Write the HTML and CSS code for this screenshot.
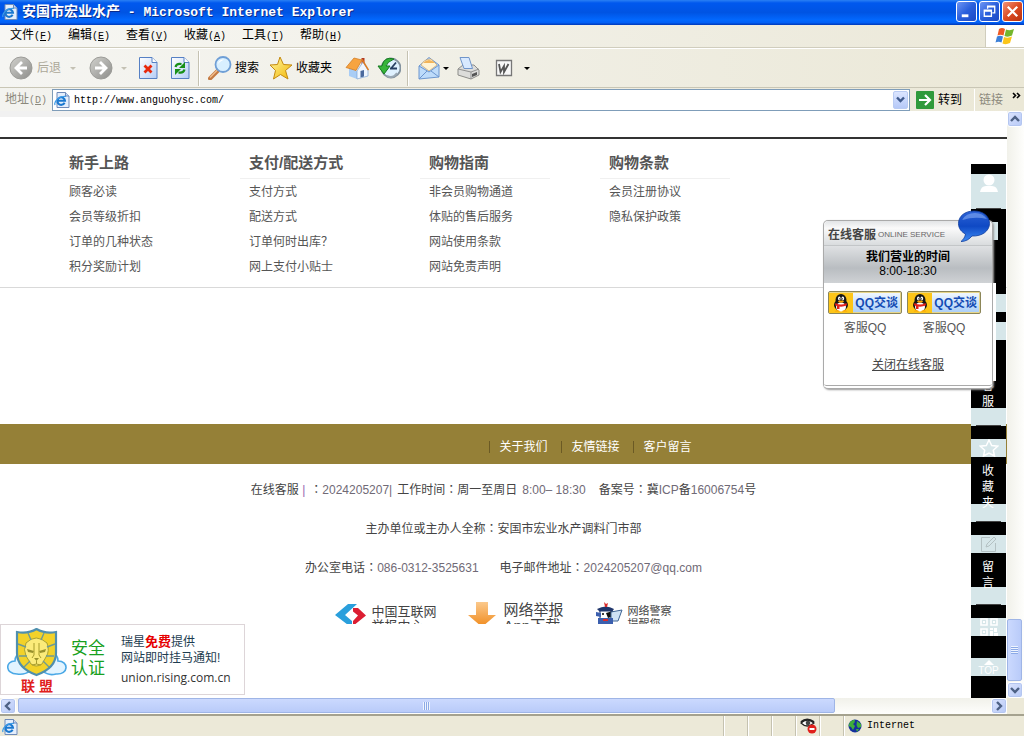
FILE: index.html
```html
<!DOCTYPE html>
<html lang="zh-CN">
<head>
<meta charset="utf-8">
<title>安国市宏业水产 - Microsoft Internet Explorer</title>
<link rel="stylesheet" href="styles.css">
</head>
<body>
<svg width="0" height="0" class="defs" aria-hidden="true">
  <defs>
    <linearGradient id="gGrey" x1="0" y1="0" x2="1" y2="1"><stop offset="0" stop-color="#d2d2ce"/><stop offset="1" stop-color="#8d8d8a"/></linearGradient>
    <linearGradient id="gPage" x1="0" y1="0" x2="1" y2="1"><stop offset="0" stop-color="#fff"/><stop offset="1" stop-color="#b5cdf6"/></linearGradient>
    <linearGradient id="gBubble" x1="0" y1="0" x2="0" y2="1"><stop offset="0" stop-color="#2c62d6"/><stop offset=".5" stop-color="#0f49c4"/><stop offset="1" stop-color="#3d8cf5"/></linearGradient>
    <linearGradient id="gStar" x1="0" y1="0" x2="1" y2="1"><stop offset="0" stop-color="#fff6a0"/><stop offset="1" stop-color="#f2b705"/></linearGradient>
    <linearGradient id="gDown" x1="0" y1="0" x2="0" y2="1"><stop offset="0" stop-color="#fbc98c"/><stop offset="1" stop-color="#f08a1c"/></linearGradient>
    <symbol id="ie" viewBox="0 0 16 16">
      <path d="M3 .5h8.500L15 4v11.500H3z" fill="#e4eefc" stroke="#6f8ab8"/>
      <path d="M11.500.5V4H15" fill="#c5d8f5" stroke="#6f8ab8"/>
      <path d="M10.600 10.800A3.800 3.800 0 1 1 11 8.700H4" fill="none" stroke="#1a78cf" stroke-width="2"/>
      <path d="M1 13C-.5 9 6 3.500 12 4.500" fill="none" stroke="#3c9be8" stroke-width="1.200"/>
    </symbol>
    <symbol id="penguin" viewBox="0 0 20 20">
      <ellipse cx="10" cy="12" rx="7" ry="6" fill="#151515"/>
      <ellipse cx="10" cy="7" rx="5.500" ry="6" fill="#151515"/>
      <ellipse cx="10" cy="14" rx="5" ry="4.500" fill="#fff"/>
      <ellipse cx="8.300" cy="5.500" rx="1.300" ry="1.900" fill="#fff"/><ellipse cx="11.800" cy="5.500" rx="1.300" ry="1.900" fill="#fff"/>
      <circle cx="8.700" cy="5.800" r=".6"/><circle cx="11.400" cy="5.800" r=".6"/>
      <ellipse cx="10" cy="8.600" rx="3" ry="1.100" fill="#f9a300"/>
      <path d="M4.500 10q5.500 3 11 0l.5 2.300q-6 2.700-12 0z" fill="#e3201b"/><path d="M6 12.500h2.500V16H6z" fill="#e3201b"/>
      <path d="M3.500 18.500q3-3 6 0zM10.500 18.500q3-3 6 0z" fill="#f9a300"/>
    </symbol>
  </defs>
</svg>

<header class="titlebar">
  <svg class="i16"><use href="#ie"/></svg>
  <h1 class="title">安国市宏业水产<span class="title-latin"> - Microsoft Internet Explorer</span></h1>
  <div class="winbtns">
    <button class="winbtn" aria-label="最小化"><svg viewBox="0 0 20 20"><path d="M5 13h7v3H5z" fill="#fff"/></svg></button>
    <button class="winbtn" aria-label="还原"><svg viewBox="0 0 20 20"><path d="M8 7V4.500h7.500v7H13M4.500 8.500h7.500v6.500H4.500zM4.500 9.500H12M8 5h7" fill="none" stroke="#fff" stroke-width="1.400"/></svg></button>
    <button class="winbtn close" aria-label="关闭"><svg viewBox="0 0 20 20"><path d="M5 5l10 10M15 5L5 15" stroke="#fff" stroke-width="2.400"/></svg></button>
  </div>
</header>

<nav class="menubar">
  <div class="menus">
    <button class="menu">文件<span class="key">(<u>F</u>)</span></button>
    <button class="menu">编辑<span class="key">(<u>E</u>)</span></button>
    <button class="menu">查看<span class="key">(<u>V</u>)</span></button>
    <button class="menu">收藏<span class="key">(<u>A</u>)</span></button>
    <button class="menu">工具<span class="key">(<u>T</u>)</span></button>
    <button class="menu">帮助<span class="key">(<u>H</u>)</span></button>
  </div>
  <div class="flag">
    <svg width="20" height="18" viewBox="0 0 20 18"><path d="M4 2q3-2 6 0L8.500 8.500q-3-1.500-6 0z" fill="#ee5a24"/><path d="M11 2.500q4 1.500 8-.5L17 8.500q-4 2-7.500.5z" fill="#74b62c"/><path d="M2 9.500q3-1.500 6 0L6.500 15.500q-3-1.500-6 0z" fill="#3c80d8"/><path d="M9 10q4 1.500 8-.5L15 16q-4 2-7.500.5z" fill="#fbc51a"/></svg>
  </div>
</nav>

<div class="toolbar">
  <button class="tool dim back"><svg class="i24" viewBox="0 0 24 24"><circle cx="12" cy="12" r="11" fill="url(#gGrey)" stroke="#9c9c98"/><path d="M13 6l-6 6 6 6M7.500 12H18" fill="none" stroke="#fff" stroke-width="2.800"/></svg><span>后退</span></button>
  <i class="drop dim g9"></i>
  <button class="tool g13" aria-label="前进"><svg class="i24" viewBox="0 0 24 24"><circle cx="12" cy="12" r="11" fill="url(#gGrey)" stroke="#9c9c98"/><path d="M11 6l6 6-6 6M16.500 12H6" fill="none" stroke="#fff" stroke-width="2.800"/></svg></button>
  <i class="drop dim g8"></i>
  <button class="tool g11" aria-label="停止"><svg width="20" height="24" viewBox="0 0 20 24"><path d="M1.500 1.500H14l5 5v16H1.500z" fill="url(#gPage)" stroke="#5680c4"/><path d="M14 1.500v5h5" fill="#fff" stroke="#5680c4"/><path d="M6.500 9.500l7 7M13.500 9.500l-7 7" stroke="#e8280c" stroke-width="2.800"/></svg></button>
  <button class="tool g12" aria-label="刷新"><svg width="20" height="24" viewBox="0 0 20 24"><path d="M1.500 1.500H14l5 5v16H1.500z" fill="url(#gPage)" stroke="#5680c4"/><path d="M14 1.500v5h5" fill="#fff" stroke="#5680c4"/><path d="M5.500 11q1-4 6-3" fill="none" stroke="#189018" stroke-width="2.200"/><path d="M15 6v6H9z" fill="#189018"/><path d="M14.500 13.500q-1 4-6 3" fill="none" stroke="#189018" stroke-width="2.200"/><path d="M5 19v-6h6z" fill="#189018"/></svg></button>
  <i class="sep g8"></i>
  <button class="tool g8"><svg class="i24" viewBox="0 0 24 24"><path d="M10 14.500L2 22.500" stroke="#c47a42" stroke-width="4" stroke-linecap="round"/><path d="M9.500 14L2 21.500" stroke="#f0bd8c" stroke-width="1.500"/><circle cx="15" cy="8.500" r="7.500" fill="#d8efff" stroke="#6f9fd6" stroke-width="1.800"/><path d="M10 8q1-5 6-4.500-4 2-6 4.500" fill="#fff"/></svg><span>搜索</span></button>
  <button class="tool g10"><svg class="i24" viewBox="0 0 24 24"><path d="M11 1l3.500 7.500 8.500.5-6.500 5.500 2.500 8.500-7.500-4.500L4.500 23l2-8.500L1 9l7.500-.5z" fill="url(#gStar)" stroke="#c48a10"/></svg><span>收藏夹</span></button>
  <button class="tool g13" aria-label="主页"><svg class="i24" viewBox="0 0 24 24"><path d="M16.500 2h3v7h-3z" fill="#b23a20"/><path d="M4 11l8 4v8l-8-3z" fill="#a9cdf5"/><path d="M12 15l6-9 5 8v6l-11 3z" fill="#eef6ff" stroke="#7ba3d4" stroke-width=".7"/><path d="M1 11.500L9 2l8 2-6 10.500z" fill="#f7a440" stroke="#cf7418" stroke-width=".7"/><path d="M17 3.500l6.500 10.500" stroke="#dd7d24" stroke-width="1.500"/><path d="M15.500 15l3.500-1v6.500l-3.500 1z" fill="#4a6a9e"/></svg></button>
  <button class="tool g8" aria-label="历史"><svg class="i24" viewBox="0 0 24 24"><circle cx="14" cy="12" r="9.500" fill="#dff1ff" stroke="#84939f" stroke-width="1.800"/><path d="M14 12.500l5-6M13 12.500h7" stroke="#273f63" stroke-width="1.800"/><path d="M17 3Q7 0 5 10H1l6 8 6-8H9q1-4 8-7z" fill="#37b53a" stroke="#157a20"/><path d="M10 20q6 3 10-3" fill="none" stroke="#9aa8b4" stroke-width="2"/></svg></button>
  <i class="sep g6"></i>
  <button class="tool g8" aria-label="邮件"><svg class="i24" viewBox="0 0 24 24"><path d="M2 10L12 1.500 22 9v12L2 23z" fill="#bddbfa" stroke="#6c96cf"/><path d="M4 9q3-6 10-6l6 6-8 6z" fill="#fff3d4" stroke="#cda365" stroke-width=".7"/><path d="M6 7q6-6 12 0z" fill="#f2b458"/><path d="M2 10l10 6L22 9M2 23l8-8M22 21l-8-6" fill="none" stroke="#6c96cf"/></svg></button>
  <i class="drop g2"></i>
  <button class="tool g7" aria-label="打印"><svg class="i24" viewBox="0 0 24 24"><path d="M2 13l5-4h11l5 5v5l-8 4-13-4z" fill="#dcdcda" stroke="#8d8d8a"/><path d="M4 1.500h9l3.500 11H8z" fill="#d8e9ff" stroke="#7095ca"/><path d="M2 13l13 3 8-3M15 16v7" fill="none" stroke="#919191"/><path d="M16 18l5-2v3l-5 2z" fill="#555"/></svg></button>
  <button class="tool g15" aria-label="编辑"><svg width="18" height="18" viewBox="0 0 18 18"><path d="M1.500 1.500h15v15h-15z" fill="#f8f8f8" stroke="#777" stroke-width="1.300"/><path d="M4 5l1.500 8 3.500-6v6l4.500-8" fill="none" stroke="#555" stroke-width="1.800"/></svg></button>
  <i class="drop g11"></i>
</div>

<div class="addressbar">
  <label class="addr-label" for="addr">地址<span class="key">(<u>D</u>)</span></label>
  <div class="addr-box">
    <svg class="i16"><use href="#ie"/></svg>
    <input id="addr" class="addr-input" type="text" value="http://www.anguohysc.com/">
    <button class="addr-drop" aria-label="展开"><svg width="9" height="8" viewBox="0 0 9 8"><path d="M1 1.500l3.500 3.500L8 1.500" fill="none" stroke="#3f5a8c" stroke-width="2.400"/></svg></button>
  </div>
  <button class="go"><svg width="18" height="18" viewBox="0 0 18 18"><rect width="18" height="18" rx="1" fill="#2f9a3b"/><path d="M3 9h10M9 4l5 5-5 5" fill="none" stroke="#fff" stroke-width="2.200"/></svg><span>转到</span></button>
  <button class="links"><span>链接</span><svg width="9" height="8" viewBox="0 0 9 8"><path d="M1 1l2.500 2.500L1 6M5 1l2.500 2.500L5 6" fill="none" stroke="#000" stroke-width="1.600"/></svg></button>
</div>

<div class="window">
  <main class="view">
    <div class="strip"></div>
    <section class="help">
      <div class="col"><h2>新手上路</h2><a href="#">顾客必读</a><a href="#">会员等级折扣</a><a href="#">订单的几种状态</a><a href="#">积分奖励计划</a></div>
      <div class="col"><h2>支付/配送方式</h2><a href="#">支付方式</a><a href="#">配送方式</a><a href="#">订单何时出库？</a><a href="#">网上支付小贴士</a></div>
      <div class="col"><h2>购物指南</h2><a href="#">非会员购物通道</a><a href="#">体贴的售后服务</a><a href="#">网站使用条款</a><a href="#">网站免责声明</a></div>
      <div class="col"><h2>购物条款</h2><a href="#">会员注册协议</a><a href="#">隐私保护政策</a></div>
    </section>
    <nav class="band"><a href="#">关于我们</a><a href="#">友情链接</a><a href="#">客户留言</a></nav>
    <footer class="foot">
      <p class="line"><span>在线客服 <b class="bar">|</b></span><span><b class="colon" lang="zh-Hant">：</b><b class="num">2024205207|</b></span><span>工作时间<b class="colon" lang="zh-Hant">：</b>周一至周日</span><span class="num">8:00– 18:30</span><span class="wide">备案号<b class="colon" lang="zh-Hant">：</b>冀<b class="num">ICP</b>备<b class="num">16006754</b>号</span></p>
      <p class="line"><span>主办单位或主办人全称<b class="colon" lang="zh-Hant">：</b>安国市宏业水产调料门市部</span></p>
      <p class="line"><span>办公室电话<b class="colon" lang="zh-Hant">：</b><b class="num">086-0312-3525631</b></span><span class="wider">电子邮件地址<b class="colon" lang="zh-Hant">：</b><b class="num">2024205207@qq.com</b></span></p>
      <div class="logos">
        <a class="logo" href="#"><svg width="32" height="24" viewBox="0 0 32 24"><path d="M0 13L13 2h9l-12 11 7 6v7z" fill="#2a9fdc"/><path d="M18 6h5l8 7.500L18 24v-5l5-5.500-5-4z" fill="#dc1e32"/></svg><span>中国互联网<br>举报中心</span></a>
        <a class="logo app" href="#"><svg width="28" height="24" viewBox="0 0 28 24"><path d="M8 0h12v13h8L14 25 0 13h8z" fill="url(#gDown)"/></svg><span>网络举报<br>App下载</span></a>
        <a class="logo police" href="#"><svg width="28" height="24" viewBox="0 0 28 24"><path d="M2 7q9-5 17 0l-2 3H5z" fill="#20366c"/><path d="M9 0l2 2 2-1-1 4h-2z" fill="#d92b2b"/><path d="M5 9h11v8q-5 3-11 0z" fill="#fff" stroke="#20366c"/><path d="M11 11l7-2 1 5-6 2z" fill="#111"/><path d="M16 10l11-2-4 11h-7z" fill="#cfe2f5" stroke="#3f6494"/><path d="M3 16h15v7H3z" fill="#3b5fae"/><path d="M1 10l5 1v4l-5-1z" fill="#3b5fae"/><circle cx="8" cy="12" r="1"/><path d="M8 17h5v2H8z" fill="#d92b2b"/></svg><span>网络警察<br>提醒您</span></a>
      </div>
    </footer>

    <aside class="rail">
      <div class="k k10"></div>
      <div class="l l35 ruled"><svg width="20" height="20" viewBox="0 0 20 20"><circle cx="10" cy="6" r="5.500" fill="#fff"/><path d="M1 18q1-6 6-6h6q5 0 6 6z" fill="#fff"/></svg></div>
      <div class="k k13"></div><div class="l part"></div>
      <div class="k k54"></div><div class="l"></div>
      <div class="k k10"></div><div class="l"></div>
      <div class="k service">客服</div><div class="l ruled"></div>
      <div class="k k13"></div>
      <div class="l"><svg width="20" height="18" viewBox="0 0 20 18"><path d="M10 1l2.700 5.500 6 .7-4.400 4 1.200 5.800L10 14l-5.500 3 1.200-5.800-4.400-4 6-.7z" fill="none" stroke="#fff" stroke-width="1.500"/></svg></div>
      <div class="k fav">收藏夹</div><div class="l ruled"></div>
      <div class="k k13"></div>
      <div class="l"><svg width="18" height="18" viewBox="0 0 18 18"><path d="M15.500 8v8.500h-14v-14H10M6 12l1-3 7-7 2 2-7 7z" fill="none" stroke="#b4c1c3"/></svg></div>
      <div class="k msg">留言</div><div class="l ruled"></div>
      <div class="k k13"></div>
      <div class="l"><svg width="18" height="18" viewBox="0 0 18 18"><path d="M1 1h6v6H1zM11 1h6v6h-6zM1 11h6v6H1z" fill="none" stroke="#fff" stroke-width="1.600"/><path d="M3 3h2v2H3zM13 3h2v2h-2zM3 13h2v2H3zM10 10h3v2h-3zM14 10h3v4h-3zM10 13h3v5h-3zM14 15h4v3h-4z" fill="#fff"/></svg></div>
      <div class="k k22"></div>
      <div class="l top"><svg width="10" height="5" viewBox="0 0 10 5"><path d="M5 0l5 5H0z" fill="#fff"/></svg><span>TOP</span></div>
    </aside>

    <aside class="chat">
      <div class="chat-head"><b>在线客服</b><span>ONLINE SERVICE</span></div>
      <svg class="bubble" width="34" height="34" viewBox="0 0 34 34"><path d="M17 1C8 1 1.500 6 1.500 13.500c0 5 3 8.500 7 10.500-.5 3-2 5.500-4.500 7.500 5 0 8.500-2.500 11-5.500C25 26.500 32.500 21 32.500 13.500S26 1 17 1z" fill="url(#gBubble)" stroke="#0b3a9c" stroke-width=".8"/><path d="M5 10q4-7 13-7 8 0 12 6-12-3-25 1z" fill="#7da5f0" opacity=".65"/></svg>
      <div class="chat-hours"><b>我们营业的时间</b><span>8:00-18:30</span></div>
      <div class="chat-body">
        <div class="agents">
          <div class="agent"><button class="qq"><svg width="20" height="20"><use href="#penguin"/></svg><span>QQ交谈</span></button><span>客服QQ</span></div>
          <div class="agent"><button class="qq"><svg width="20" height="20"><use href="#penguin"/></svg><span>QQ交谈</span></button><span>客服QQ</span></div>
        </div>
        <a class="chat-close" href="#">关闭在线客服</a>
      </div>
    </aside>

    <a class="rising" href="#">
      <span class="shield">
        <svg width="60" height="50" viewBox="0 0 60 50"><path d="M10 46C-2 46-2 33 8 33c0-9 12-10 15-4h14c3-7 14-5 14 4 11 0 11 14-2 13q-8 2-13-3-6 6-13 0-5 4-13 3z" fill="#e2f4ff" stroke="#4aa8e6" stroke-width="1.600"/><path d="M10 4q11 2 19.500-3Q38 6 49 4v21q0 15-19.500 22Q10 40 10 25z" fill="#f2d229" stroke="#4f8fae" stroke-width="2.200"/><path d="M19 15q10-10 21 0 3 8-1 14l-4 7q-6 4-11 0l-5-8q-3-6 0-13z" fill="#fbeb7a" stroke="#a8a030"/><path d="M11 16l8 3M48 16l-8 3M12 28l8 0M47 28l-8 0M17 39l6-6M42 39l-6-6M21 5l3 7M37 5l-3 7" stroke="#6c9a96" stroke-width="1.400"/><path d="M20 21l7 2-1 2-5-1zM39 21l-7 2 1 2 5-1zM27 30h5l-2.500 3z" fill="#98902c"/><path d="M29.500 33v3M25 37q4.500-2 9 0M27 15v12l-2 3M32 15v12l2 3" fill="none" stroke="#a89c2c"/></svg>
        <b>联 盟</b>
      </span>
      <span class="safe">安全<br>认证</span>
      <span class="rising-text"><span>瑞星<b>免费</b>提供</span><span>网站即时挂马通知!</span><span class="domain">union.rising.com.cn</span></span>
    </a>
  </main>
  <div class="vscroll"><button class="sb" aria-label="向上"><svg width="10" height="8" viewBox="0 0 10 8"><path d="M1 6l4-4 4 4" fill="none" stroke="#4d6185" stroke-width="2.400"/></svg></button><div class="vthumb"><i class="grip"></i></div><button class="sb" aria-label="向下"><svg width="10" height="8" viewBox="0 0 10 8"><path d="M1 2l4 4 4-4" fill="none" stroke="#4d6185" stroke-width="2.400"/></svg></button></div>
  <div class="hscroll"><button class="sb" aria-label="向左"><svg width="8" height="10" viewBox="0 0 8 10"><path d="M6 1L2 5l4 4" fill="none" stroke="#4d6185" stroke-width="2.400"/></svg></button><div class="htrack"><div class="hthumb"><i class="grip upright"></i></div></div><button class="sb" aria-label="向右"><svg width="8" height="10" viewBox="0 0 8 10"><path d="M2 1l4 4-4 4" fill="none" stroke="#4d6185" stroke-width="2.400"/></svg></button></div>
  <div class="corner"></div>
</div>

<div class="statusbar">
  <div class="ready"><svg class="i16"><use href="#ie"/></svg></div>
  <div class="pane"></div><div class="pane"></div><div class="pane"></div>
  <div class="pane"><svg width="18" height="16" viewBox="0 0 18 16"><path d="M1 5q6-6 13 0-7 6-13 0z" fill="#fff" stroke="#222" stroke-width="1.200"/><path d="M1 4q6-5 13 0" fill="none" stroke="#222" stroke-width="2"/><circle cx="8" cy="5" r="2.300" fill="#444"/><circle cx="12" cy="11" r="4.500" fill="#e0201c"/><path d="M9.500 10h5v2h-5z" fill="#fff"/></svg></div>
  <div class="pane"></div>
  <div class="pane zone"><svg width="14" height="14" viewBox="0 0 14 14"><circle cx="7" cy="7" r="6.500" fill="#14309c"/><path d="M2 3q4-3 5-2 0 3-2 4l2 2-2 4-2-3-2.500-1zM9 2l4 3v3l-3 1-1.500-3zM8 10l3 0-2 3z" fill="#3fae3a"/></svg><span>Internet</span></div>
</div>
</body>
</html>
```
FILE: styles.css
```css
* { box-sizing: border-box; }
body {
  margin: 0;
  height: 100vh;
  display: flex;
  flex-direction: column;
  overflow: hidden;
  font: 12px/16px "Liberation Sans", "Noto Sans CJK SC", sans-serif;
  color: #000;
  background: #ece9d8;
}
.defs { position: absolute; }
button { font: inherit; color: inherit; padding: 0; margin: 0; border: 0; background: none; }
a { color: inherit; text-decoration: none; }
svg { display: block; flex: none; }
.i16 { width: 16px; height: 16px; }
.i24 { width: 24px; height: 24px; }
.key, .addr-input, .zone { font-family: "Liberation Mono", monospace; font-size: 10px; }

/* Title bar */
.titlebar {
  flex: none;
  height: 25px;
  padding: 0 1px 2px 2px;
  display: flex;
  align-items: center;
  gap: 4px;
  background: linear-gradient(#2a80f4, #0058ee 12%, #0054e3 50%, #0268fe 80%, #0260f6 90%, #0038b8);
}
.title { margin: 0; flex: 1; font-size: 14px; line-height: 20px; color: #fff; white-space: pre; text-shadow: 1px 1px #0a2c8c; }
.title-latin { font-family: "Liberation Mono", monospace; font-size: 13px; }
.winbtns { display: flex; gap: 2px; }
.winbtn { width: 21px; height: 21px; border: 1px solid #fff; border-radius: 3px; background: linear-gradient(135deg, #6d95f4, #2a5fdc 50%, #1c49c4); }
.winbtn svg { width: 19px; height: 19px; }
.close { background: linear-gradient(135deg, #f0937a, #dc4a22 50%, #b8330f); }

/* Menu bar */
.menubar { flex: none; height: 23px; display: flex; border-bottom: 1px solid #d0cdbd; background: linear-gradient(90deg, #f7f7f4, #ebe8d8); }
.menus { flex: 1; display: flex; align-items: center; gap: 16px; padding-left: 10px; }
.menu { width: 42px; white-space: nowrap; text-align: left; }
.flag { width: 39px; display: flex; align-items: center; justify-content: center; background: #fff; border-left: 1px solid #d0cdbd; }

/* Toolbar */
.toolbar { flex: none; height: 40px; display: flex; align-items: center; border-top: 1px solid #fff; border-bottom: 1px solid #c9c6b5; background: linear-gradient(90deg, #f5f5f2, #ebe8d7); }
.tool { display: flex; align-items: center; gap: 3px; white-space: nowrap; }
.back { margin-left: 9px; gap: 4px; }
.dim { color: #aca899; }
.drop { border: 3px solid transparent; border-top-color: #000; border-bottom: 0; }
.drop.dim { border-top-color: #c4c1b4; }
.sep { width: 2px; height: 35px; border-left: 1px solid #c5c2b2; border-right: 1px solid #fff; }
.g2 { margin-left: 2px; }
.g6 { margin-left: 6px; }
.g7 { margin-left: 7px; }
.g8 { margin-left: 8px; }
.g9 { margin-left: 9px; }
.g10 { margin-left: 10px; }
.g11 { margin-left: 11px; }
.g12 { margin-left: 12px; }
.g13 { margin-left: 13px; }
.g15 { margin-left: 15px; }

/* Address bar */
.addressbar { flex: none; height: 23px; padding: 1px 3px 0 5px; display: flex; align-items: center; background: linear-gradient(90deg, #f3f3ef, #ebe8d7); }
.addr-label { width: 47px; color: #8c897c; white-space: nowrap; }
.addr-box { flex: 1; height: 22px; padding: 1px; display: flex; align-items: center; background: #fff; border: 1px solid #7f9db9; }
.addr-input { flex: 1; min-width: 0; height: 18px; border: 0; padding: 1px 0 0 4px; background: none; outline: 0; }
.addr-drop { width: 15px; height: 18px; display: flex; align-items: center; justify-content: center; border-radius: 2px; background: linear-gradient(#dbe5ff, #b6c9f8); border: 1px solid #b9cbf3; }
.go { width: 58px; margin-left: 6px; display: flex; align-items: center; gap: 4px; white-space: nowrap; }
.links { width: 47px; height: 22px; display: flex; align-items: center; justify-content: space-between; padding-left: 4px; border-left: 1px solid #fff; color: #8c897c; }
.links svg { margin-bottom: 8px; }

/* Scrolling window */
.window { flex: 1; min-height: 0; display: grid; grid-template: minmax(0, 1fr) 16px / minmax(0, 1fr) 17px; }
.view { position: relative; overflow: hidden; background: #fff; }
.strip { width: 360px; height: 6px; background: #f1f1f1; }
.help { margin-top: 20px; padding: 13px 60px 7px; display: flex; gap: 50px; border-top: 2px solid #333; border-bottom: 1px solid #d9d9d9; color: #555; }
.col { width: 130px; display: flex; flex-direction: column; }
.col h2 { margin: 0 0 1px; padding: 0 0 4px 9px; font-size: 15px; line-height: 22px; border-bottom: 1px solid #f0f0f0; }
.col a { padding-left: 9px; line-height: 25px; }
.band { margin-top: 136px; height: 40px; padding: 6px 0 0 calc(50% - 15px); display: flex; align-items: center; gap: 13px; color: #fff; background: #958037; }
.band a { padding-left: 10px; line-height: 12px; border-left: 1px solid #6b5a24; }
.foot { padding-top: 7px; color: #444; }
.line { margin: 0; height: 39px; display: flex; justify-content: center; line-height: 39px; white-space: pre; gap: 5px; }
.line b { font-weight: normal; }
.num { color: #706a76; }
.bar { color: #9367b0; }
.colon { font-family: "Liberation Sans", "Noto Sans CJK TC", sans-serif; }
.wide { margin-left: 8px; }
.wider { margin-left: 16px; }
.logos { margin-top: 14px; height: 22px; overflow: hidden; display: flex; justify-content: center; gap: 31px; }
.logo { display: flex; gap: 4px; font-size: 13px; line-height: 14px; }
.logo span { padding-top: 3px; }
.logo.app { gap: 8px; font-size: 15px; line-height: 16px; }
.logo.app span { padding-top: 0; }
.logo.police { gap: 5px; font-size: 11px; line-height: 13px; }

/* Side rail */
.rail { position: absolute; top: 53px; right: 1px; bottom: 0; width: 35px; background: #000; color: #fff; text-align: center; }
.l { height: 18px; background: #d6e6e9; }
.l svg { margin: 0 auto; }
.ruled { background: linear-gradient(#444, #444) 5px 100% / 25px 1px no-repeat #d6e6e9; }
.l35 { height: 35px; }
.part { width: 27px; }
.k10 { height: 10px; }
.k13 { height: 13px; }
.k22 { height: 22px; }
.k54 { height: 54px; }
.service, .fav, .msg { padding: 6px 11px 0 10px; word-break: break-all; }
.service { height: 68px; padding-top: 38px; }
.fav { height: 47px; }
.msg { height: 34px; }
.top { font-size: 10px; line-height: 12px; padding-top: 2px; }
.top span { display: block; }

/* Chat panel */
.chat { position: absolute; top: 109px; right: 14px; width: 170px; height: 169px; border: 1px solid #aaa; border-bottom: 4px double #aaa; border-radius: 5px; background: #fff; box-shadow: 1px 1px 2px #999; text-align: center; }
.chat::after { content: ""; position: absolute; top: 62px; right: -4px; width: 3px; height: 98px; background: #fff; }
.chat-head { height: 25px; padding: 4px 0 0 4px; display: flex; align-items: center; gap: 2px; border-radius: 5px 5px 0 0; background: linear-gradient(#e2e4e6, #fafafa 30%, #d9dcde); border-bottom: 1px solid #c3c6c8; color: #444; }
.chat-head span { font-size: 8px; line-height: 12px; color: #666; white-space: nowrap; }
.bubble { position: absolute; top: -11px; right: 1px; }
.chat-hours { height: 37px; padding-top: 4px; display: flex; flex-direction: column; line-height: 14px; background: linear-gradient(#dfe1e3, #b9bdc1 60%, #cfd2d5); }
.chat-body { padding: 8px 0 0 4px; color: #555; }
.agents { display: flex; gap: 5px; }
.agent { width: 74px; display: flex; flex-direction: column; gap: 6px; }
.qq { height: 23px; padding-right: 3px; display: flex; align-items: center; justify-content: space-between; overflow: hidden; border: 1px solid #8c8658; border-radius: 2px; background: linear-gradient(#f3f9ff, #a9cef8); box-shadow: inset 0 0 0 1px #e8d68a; color: #144cb4; font-weight: bold; white-space: nowrap; }
.qq svg { width: 24px; background: #fdc518; }
.chat-close { display: block; padding: 21px 4px 0 0; text-decoration: underline; color: #444; }

/* Security badge */
.rising { position: absolute; left: 0; bottom: 3px; width: 245px; height: 71px; padding: 3px 0 0 6px; display: flex; background: #fff; border: 1px solid #ddd5d8; color: #1d3c50; white-space: nowrap; }
.shield { width: 60px; text-align: center; }
.shield b { display: block; font-size: 14px; color: #e0201c; white-space: nowrap; }
.safe { margin: 11px 0 0 4px; width: 50px; font-size: 17px; line-height: 20px; color: #18a020; }
.rising-text { padding-top: 6px; display: flex; flex-direction: column; }
.rising-text b { font-size: 13px; color: #e60000; }
.domain { margin-top: 4px; font-family: "Open Sans", sans-serif; color: #333; }

/* Scroll bars */
.sb { flex: none; width: 16px; height: 16px; display: flex; align-items: center; justify-content: center; border: 1px solid #fff; border-radius: 3px; background: linear-gradient(135deg, #dbe4fe, #b7c9f6); box-shadow: inset 0 0 0 1px #b4c6f0; }
.vscroll { display: flex; flex-direction: column; background: linear-gradient(90deg, #f1f1ea, #fefefc); }
.vthumb { margin-top: auto; margin-bottom: 1px; width: 15px; height: 62px; display: flex; align-items: center; justify-content: center; background: linear-gradient(90deg, #cbd9fe, #b9cbf9); border: 1px solid #9fb5e6; border-radius: 2px; }
.hscroll { display: flex; background: linear-gradient(#f1f1ea, #fefefc); }
.htrack { flex: 1; padding: 0 0 1px 2px; display: flex; }
.hthumb { width: 84%; display: flex; align-items: center; justify-content: center; background: linear-gradient(#cbd9fe, #b9cbf9); border: 1px solid #9fb5e6; border-radius: 2px; }
.grip { width: 7px; height: 8px; background: repeating-linear-gradient(#eef4fe 0 1px, #8caae6 1px 2px); }
.upright { background: repeating-linear-gradient(90deg, #eef4fe 0 1px, #8caae6 1px 2px); }
.corner { background: #ece9d8; }

/* Status bar */
.statusbar { flex: none; height: 22px; display: flex; border-top: 2px solid #a5a28f; background: #ece9d8; }
.ready { flex: 1; padding: 3px 0 0 2px; }
.pane { width: 24px; display: flex; align-items: center; padding-left: 4px; border-left: 1px solid #c5c2b0; box-shadow: inset 1px 0 #fff; }
.zone { width: 181px; gap: 5px; }
```
